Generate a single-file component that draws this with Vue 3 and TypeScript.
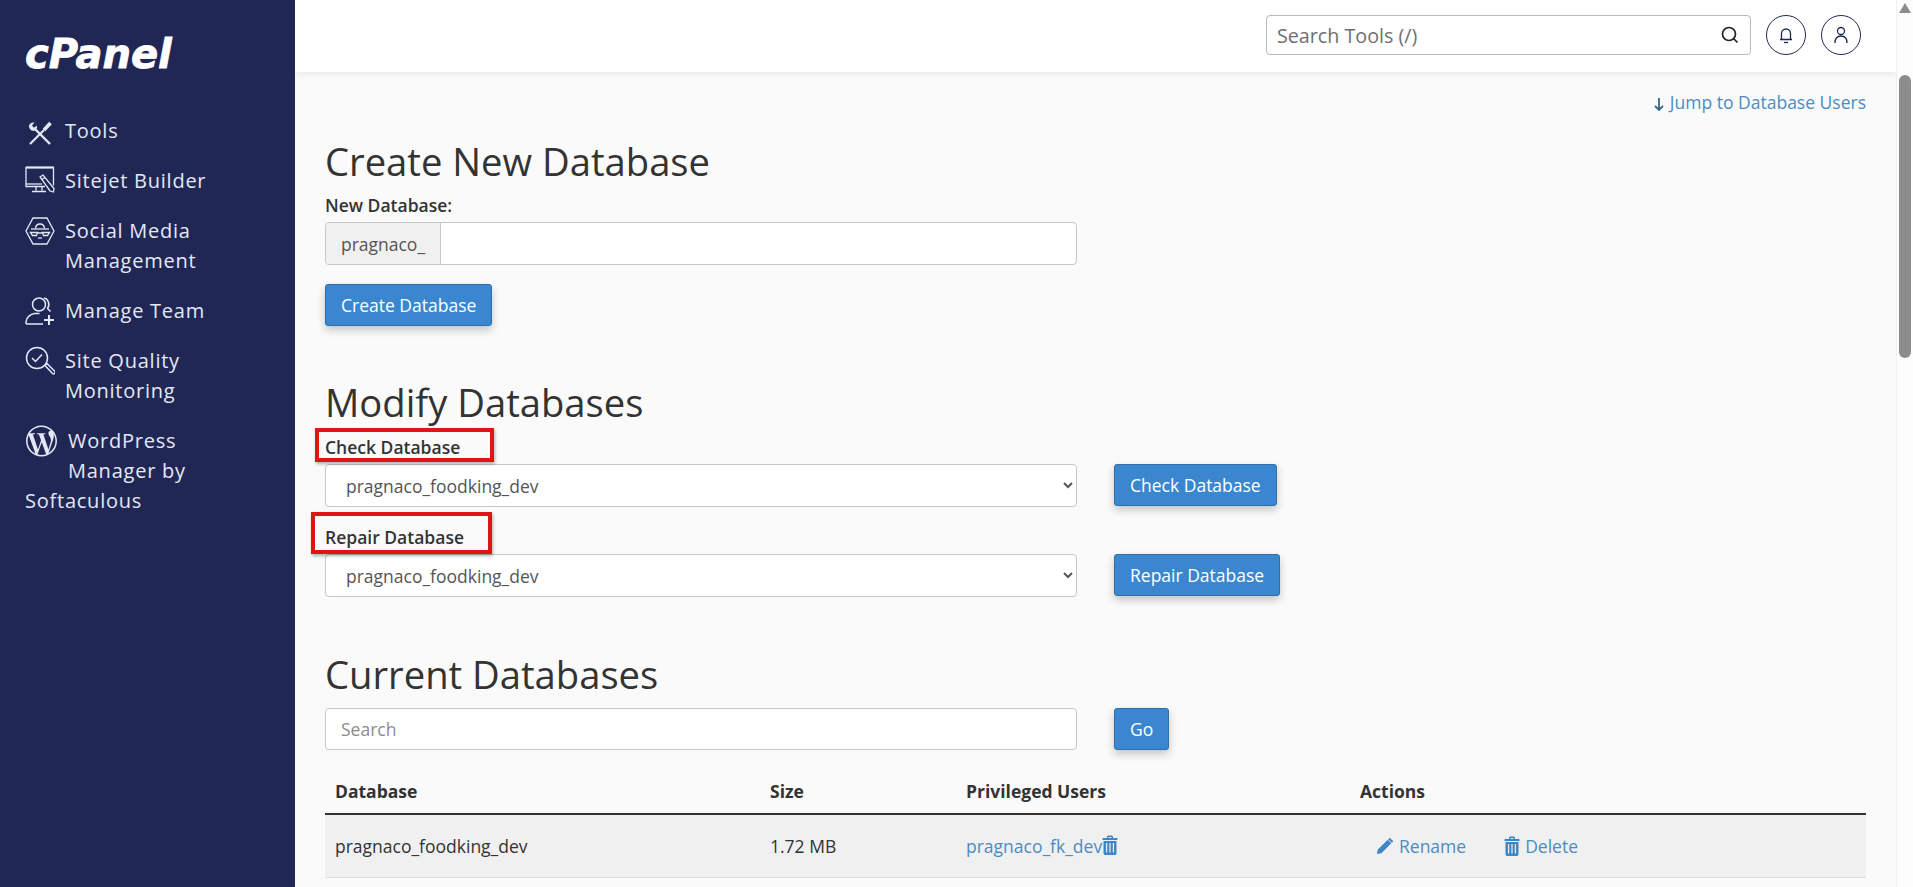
<script setup lang="ts">
const dbName = 'pragnaco_foodking_dev'
const forms = [
  { label: 'Check Database', mark: 'mark--check' },
  { label: 'Repair Database', mark: 'mark--repair' },
]
</script>

<template>
  <div class="page">
    <aside class="sidebar">
      <div class="logo">cPanel</div>
      <nav class="nav">
        <a class="nav-item">
          <svg class="nav-icon" viewBox="0 0 30 30" fill="none" stroke="currentColor">
            <path d="M9 12 25 28" stroke-width="2.4" />
            <path d="M4 9.500a5 5 0 0 1 5.500-3l-2.500 3 2 2.200 3-2.200a5 5 0 0 1-3.500 5.500 5 5 0 0 1-4.500-5.500z" fill="currentColor" stroke="none" />
            <path d="M5 28 19 14" stroke-width="2.2" />
            <path d="M19 14 25.500 7" stroke-width="3.600" />
          </svg>
          <span>Tools</span>
        </a>
        <a class="nav-item">
          <svg class="nav-icon nav-icon--tall" viewBox="0 0 30 30" fill="none" stroke="currentColor" stroke-width="1.3">
            <path d="M20 20.500H1V1.500h27.500v18" />
            <path d="M1 1.500h27.500" stroke-width="2" />
            <path d="M1 18h16" />
            <path d="M11 20.500v4M17 20.500v4M7 25.500h14" />
            <path d="M15 11l3-2 11 13.500-.5 3.500-3.500-1z" fill="#212755" />
            <path d="M17 13.500l3-2" />
          </svg>
          <span>Sitejet Builder</span>
        </a>
        <a class="nav-item">
          <svg class="nav-icon" viewBox="0 0 30 30" fill="none" stroke="currentColor" stroke-width="1.3">
            <path d="M8 2h14l7 13-7 13H8L1 15z" />
            <path d="M10.500 12.500c.5-6 8.500-6 9 0" />
            <path d="M6 13h18" />
            <path d="M5.500 16.500h7l-1 3h-4zM17.500 16.500h7l-2 3h-4zM13 17h4" />
            <path d="M13 22h4" />
          </svg>
          <span>Social Media<br />Management</span>
        </a>
        <a class="nav-item">
          <svg class="nav-icon" viewBox="0 0 30 30" fill="none" stroke="currentColor" stroke-width="1.500">
            <circle cx="14" cy="8.500" r="6.500" />
            <path d="M19 2c4 .5 6.500 6.500 3.500 10.500l3 3" />
            <path d="M1 28v-2c0-5 5-8 8.500-8.500h5" />
            <path d="M1 28h17" />
            <path d="M24 19v10M19 24h10" stroke-width="2" />
          </svg>
          <span>Manage Team</span>
        </a>
        <a class="nav-item">
          <svg class="nav-icon" viewBox="0 0 30 30" fill="none" stroke="currentColor" stroke-width="1.500">
            <circle cx="12" cy="12" r="10.500" />
            <path d="M7 12l3.500 3.500L17 8.500" />
            <path d="M20 19.500l7.500 8a1.500 1.500 0 0 0 2-2.500l-7.500-7.500z" />
          </svg>
          <span>Site Quality<br />Monitoring</span>
        </a>
        <a class="nav-item nav-item--float">
          <svg class="nav-icon nav-icon--wp" viewBox="0 0 24 24" fill="currentColor">
            <path d="M21.469 6.825c.84 1.537 1.318 3.3 1.318 5.175 0 3.979-2.156 7.456-5.363 9.325l3.295-9.527c.615-1.54.82-2.771.82-3.864 0-.405-.026-.78-.07-1.11m-7.981.105c.647-.03 1.232-.105 1.232-.105.582-.075.514-.93-.067-.899 0 0-1.755.135-2.88.135-1.064 0-2.85-.15-2.85-.15-.585-.03-.661.855-.075.885 0 0 .54.061 1.125.09l1.68 4.605-2.37 7.08L5.354 6.9c.649-.03 1.234-.1 1.234-.1.585-.075.516-.93-.065-.896 0 0-1.746.138-2.874.138-.2 0-.438-.008-.69-.015C4.911 3.15 8.235 1.215 12 1.215c2.809 0 5.365 1.072 7.286 2.833-.046-.003-.091-.009-.141-.009-1.06 0-1.812.923-1.812 1.914 0 .89.513 1.643 1.06 2.531.411.72.89 1.643.89 2.977 0 .915-.354 1.994-.821 3.479l-1.075 3.585-3.9-11.61.001.014zM12 22.784c-1.059 0-2.081-.153-3.048-.437l3.237-9.406 3.315 9.087c.024.053.05.101.078.149-1.12.393-2.325.609-3.582.609M1.211 12c0-1.564.336-3.05.935-4.39L7.29 21.709C3.694 19.96 1.212 16.271 1.211 12M12 0C5.385 0 0 5.385 0 12s5.385 12 12 12 12-5.385 12-12S18.615 0 12 0" />
          </svg>
          WordPress<br />Manager by<br />Softaculous
        </a>
      </nav>
    </aside>

    <div class="main">
      <header class="topbar">
        <div class="tool-search">
          <input class="tool-search-input" placeholder="Search Tools (/)" />
          <svg class="tool-search-icon" viewBox="0 0 20 20" fill="none" stroke="currentColor" stroke-width="1.7">
            <circle cx="9" cy="9" r="6.500" />
            <path d="M13.500 13.500 17.500 17.500" />
          </svg>
        </div>
        <button type="button" class="round-btn">
          <svg viewBox="0 0 20 20" fill="none" stroke="currentColor" stroke-width="1.3">
            <path d="M4 14.500h12M5.500 14.500V8.500a4.500 4.500 0 0 1 9 0v6" />
            <path d="M8 17.500h4" />
          </svg>
        </button>
        <button type="button" class="round-btn">
          <svg viewBox="0 0 20 20" fill="none" stroke="currentColor" stroke-width="1.3">
            <circle cx="10" cy="6" r="3.500" />
            <path d="M4 18c0-4.500 2.500-7 6-7s6 2.500 6 7" />
          </svg>
        </button>
      </header>

      <main class="content">
        <div class="jump-row">
          <a class="link">
            <svg class="jump-arrow" viewBox="0 0 12 16" fill="none" stroke="#2d6b82" stroke-width="1.800">
              <path d="M6 2v12M2 10l4 4 4-4" />
            </svg>
            Jump to Database Users
          </a>
        </div>

        <h1 class="heading heading--create">Create New Database</h1>
        <label class="field-label field-label--new">New Database:</label>
        <div class="input-group">
          <span class="input-prefix">pragnaco_</span>
          <input class="input-plain" />
        </div>
        <button type="button" class="btn btn--create">Create Database</button>

        <h1 class="heading heading--modify">Modify Databases</h1>
        <div v-for="form in forms" :key="form.label" class="modify-form">
          <div class="label-wrap">
            <label class="field-label">{{ form.label }}</label>
            <span class="mark" :class="form.mark"></span>
          </div>
          <div class="form-row">
            <select class="select">
              <option>{{ dbName }}</option>
            </select>
            <button type="button" class="btn">{{ form.label }}</button>
          </div>
        </div>

        <h1 class="heading heading--current">Current Databases</h1>
        <div class="form-row">
          <input class="search-input" placeholder="Search" />
          <button type="button" class="btn">Go</button>
        </div>

        <table class="db-table">
          <thead>
            <tr>
              <th class="col-db">Database</th>
              <th class="col-size">Size</th>
              <th class="col-users">Privileged Users</th>
              <th>Actions</th>
            </tr>
          </thead>
          <tbody>
            <tr>
              <td>{{ dbName }}</td>
              <td>1.72 MB</td>
              <td>
                <a class="link">pragnaco_fk_dev</a><svg class="trash" viewBox="0 0 16 20" fill="#3f86c7">
                  <path d="M5 3V1.500L6 .5h4l1 1V3h4.500v2H.5V3zM6.500 3h3V2h-3z" />
                  <path fill-rule="evenodd" d="M1.500 6h13v12.500l-1 1.500h-11l-1-1.500zM4 8v9.500h1.200V8zM7.400 8v9.500h1.200V8zM10.800 8v9.500H12V8z" />
                </svg>
              </td>
              <td>
                <div class="actions">
                  <a class="link action">
                    <svg class="pencil" viewBox="0 0 20 20" fill="#3f86c7">
                      <path d="M1 19l1-5L13 3l4 4L6 18zM14.500 1.500l1-.5 3.500 3.500-.5 1-1 1-4-4z" />
                    </svg>
                    Rename
                  </a>
                  <a class="link action">
                    <svg class="trash" viewBox="0 0 16 20" fill="#3f86c7">
                      <path d="M5 3V1.500L6 .5h4l1 1V3h4.500v2H.5V3zM6.500 3h3V2h-3z" />
                      <path fill-rule="evenodd" d="M1.500 6h13v12.500l-1 1.500h-11l-1-1.500zM4 8v9.500h1.200V8zM7.400 8v9.500h1.200V8zM10.800 8v9.500H12V8z" />
                    </svg>
                    Delete
                  </a>
                </div>
              </td>
            </tr>
          </tbody>
        </table>
      </main>
    </div>

    <div class="scrollbar">
      <span class="scroll-arrow"></span>
      <span class="scroll-thumb"></span>
    </div>
  </div>
</template>

<style scoped>
.page {
  display: flex;
  height: 887px;
  overflow: hidden;
  font-family: 'Open Sans', 'Noto Sans', sans-serif;
  font-size: 17.5px;
  color: #333;
  background: #fafafa;
}

.sidebar {
  width: 295px;
  flex-shrink: 0;
  background: #212755;
  color: #e4e8f4;
  padding: 0 25px;
  box-sizing: border-box;
}

.logo {
  margin-top: 28px;
  height: 52px;
  line-height: 52px;
  font-family: 'DejaVu Sans', 'Open Sans', sans-serif;
  font-size: 40px;
  font-weight: 700;
  font-style: italic;
  color: #fff;
  -webkit-text-stroke: 0.8px #fff;
}

.nav {
  margin-top: 36px;
}

.nav-item {
  display: flex;
  gap: 10px;
  font-size: 20px;
  line-height: 30px;
  letter-spacing: 0.76px;
  margin-bottom: 20px;
}

.nav-item--float {
  display: block;
}

.nav-icon {
  width: 30px;
  height: 30px;
  flex-shrink: 0;
}

.nav-icon--wp {
  float: left;
  width: 31px;
  height: 60px;
  margin: -15px 11px 0 1px;
}

.main {
  flex: 1;
  min-width: 0;
  display: flex;
  flex-direction: column;
}

.topbar {
  height: 72px;
  flex-shrink: 0;
  background: #fff;
  box-shadow: 0 2px 6px rgba(0, 0, 0, 0.07);
  display: flex;
  align-items: center;
  justify-content: flex-end;
  gap: 15px;
  padding: 0 35px 2px 0;
  box-sizing: border-box;
}

.tool-search {
  width: 485px;
  height: 40px;
  display: flex;
  align-items: center;
  border: 1px solid #b9b9b9;
  border-radius: 4px;
  box-sizing: border-box;
  padding: 0 10px 0 8px;
}

.tool-search-input {
  flex: 1;
  border: none;
  outline: none;
  background: transparent;
  font: inherit;
  font-size: 19.7px;
  color: #333;
}

.tool-search-input::placeholder {
  color: #6f6f6f;
  opacity: 1;
}

.tool-search-icon {
  width: 20px;
  height: 20px;
  color: #222;
}

.round-btn {
  width: 40px;
  height: 40px;
  padding: 9px;
  border: 1px solid #1f2855;
  border-radius: 50%;
  background: #fff;
  color: #1f2855;
  box-sizing: border-box;
}

.round-btn svg {
  display: block;
}

.content {
  flex: 1;
  padding: 18px 30px 0 30px;
  min-height: 0;
}

.jump-row {
  display: flex;
  justify-content: flex-end;
  line-height: 25px;
  font-size: 17.5px;
}

.jump-arrow {
  width: 12px;
  height: 16px;
  vertical-align: -3px;
}

.link {
  color: #4a8cc4;
}

.heading {
  margin: 0;
  font-size: 38.2px;
  font-weight: 400;
  line-height: 44px;
  color: #333;
}

.heading--create {
  margin-top: 24px;
}

.heading--modify {
  margin-top: 54px;
  margin-bottom: 11px;
}

.heading--current {
  margin-top: 55px;
  margin-bottom: 12px;
}

.field-label {
  display: block;
  font-weight: 600;
  line-height: 24px;
  margin-bottom: 5px;
}

.field-label--new {
  margin-top: 10px;
}

.label-wrap {
  position: relative;
}

.mark {
  position: absolute;
  border: 4px solid #e01414;
  box-sizing: border-box;
  box-shadow: 1px 2px 3px rgba(0, 0, 0, 0.3);
  pointer-events: none;
}

.mark--check {
  left: -10px;
  top: -7px;
  width: 179px;
  height: 34px;
}

.mark--repair {
  left: -14px;
  top: -13px;
  width: 181px;
  height: 42px;
}

.input-group {
  width: 752px;
  height: 43px;
  display: flex;
  border: 1px solid #c7c7c7;
  border-radius: 4px;
  background: #fff;
  box-sizing: border-box;
  overflow: hidden;
}

.input-prefix {
  width: 114px;
  display: flex;
  align-items: center;
  justify-content: center;
  background: #f0f0f0;
  border-right: 1px solid #c7c7c7;
  color: #555;
}

.input-plain {
  flex: 1;
  border: none;
  outline: none;
  background: transparent;
}

.btn {
  height: 42px;
  padding: 0 15px;
  font: inherit;
  color: #fff;
  background: #3a87cf;
  border: 1px solid #2f70ab;
  border-radius: 3px;
  box-shadow: 0 4px 8px rgba(0, 0, 0, 0.22);
  white-space: nowrap;
}

.btn--create {
  display: block;
  margin-top: 19px;
}

.modify-form + .modify-form {
  margin-top: 18px;
}

.form-row {
  display: flex;
  gap: 37px;
  align-items: flex-start;
}

.select {
  width: 752px;
  height: 43px;
  padding: 0 16px;
  font: inherit;
  color: #555;
  background: #fff;
  border: 1px solid #c7c7c7;
  border-radius: 4px;
  box-sizing: border-box;
}

.search-input {
  width: 752px;
  height: 42px;
  padding: 0 15px;
  font: inherit;
  background: #fff;
  border: 1px solid #c7c7c7;
  border-radius: 4px;
  box-sizing: border-box;
  outline: none;
}

.search-input::placeholder {
  color: #8c8c8c;
  opacity: 1;
}

.db-table {
  width: 100%;
  margin-top: 19px;
  border-collapse: collapse;
  table-layout: fixed;
}

.db-table th {
  height: 45px;
  padding: 0 10px;
  font-weight: 700;
  text-align: left;
  border-bottom: 2px solid #333;
  box-sizing: border-box;
}

.db-table td {
  height: 63px;
  padding: 0 10px;
  background: #f0f0f0;
  border-bottom: 1px solid #ddd;
  box-sizing: border-box;
}

.col-db {
  width: 435px;
}

.col-size {
  width: 196px;
}

.col-users {
  width: 394px;
}

.actions {
  display: flex;
  gap: 38px;
  padding-left: 16px;
}

.action {
  display: flex;
  align-items: center;
  gap: 5px;
}

.trash {
  width: 16px;
  height: 20px;
  vertical-align: -2px;
}

.pencil {
  width: 18px;
  height: 18px;
}

.scrollbar {
  width: 17px;
  flex-shrink: 0;
  background: #fdfdfd;
  border-left: 1px solid #f0f0f0;
  box-sizing: border-box;
  display: flex;
  flex-direction: column;
  align-items: center;
}

.scroll-arrow {
  margin-top: 3px;
  border-left: 6px solid transparent;
  border-right: 6px solid transparent;
  border-bottom: 10px solid #8c8c8c;
}

.scroll-thumb {
  margin-top: 62px;
  width: 12px;
  height: 283px;
  border-radius: 6px;
  background: #8c8c8c;
}
</style>
